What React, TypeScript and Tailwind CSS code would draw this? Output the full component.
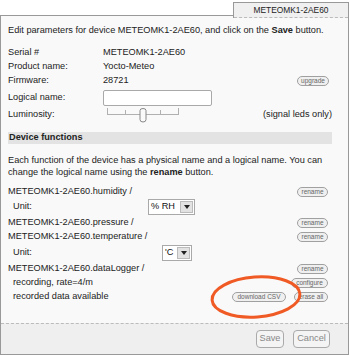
const Pill = ({ label, w }: { label: string; w: string }) => (
  <span
    className={`${w} h-[10px] flex items-center justify-center rounded-full border border-[#a0a0a0] bg-[#f0f0f0] text-[6.5px] leading-none text-[#666]`}
  >
    {label}
  </span>
);

const Select = ({ value, w }: { value: string; w: string }) => (
  <div className={`${w} h-[16px] flex border border-[#a9a9a9] bg-white`}>
    <span className="flex-1 pl-[2px] flex items-center text-[9.2px] text-[#111]">{value}</span>
    <span className="w-[13px] m-[1px] flex items-center justify-center bg-[#e2e2e2] border border-[#bbb]">
      <svg width="6" height="4" viewBox="0 0 6 4">
        <path d="M0 0h6L3 4z" fill="#222" />
      </svg>
    </span>
  </div>
);

export default function App() {
  return (
    <div className="relative w-[350px] h-[355px] bg-white font-['Liberation_Sans',Arial,sans-serif] text-[9.2px] text-[#222]">
      <div className="w-[349px] flex h-[18px]">
        <div className="flex-1 flex flex-col">
          <div className="h-[15px]" />
          <div className="flex-1 border-t border-l border-[#999] bg-[#f9f9f9]" />
        </div>
        <div className="w-[116px] mt-[2px] flex flex-col border-t border-l border-r border-[#999] bg-[#f0f0f0]">
          <div className="flex-1 flex items-center justify-center text-[8.4px] text-[#222]">METEOMK1-2AE60</div>
          <div className="border-b border-dashed border-[#bbb]" />
        </div>
      </div>

      <div className="w-[349px] h-[337px] flex flex-col border-l border-r border-b border-[#999] bg-[#f9f9f9]">
        <div className="px-[7px] pt-[6px] flex-1">
          <div className="h-[14px] flex items-center">
            Edit parameters for device METEOMK1-2AE60, and click on the&nbsp;<b>Save</b>&nbsp;button.
          </div>

          <div className="mt-[8px]">
            <div className="h-[14px] flex items-center">
              <span className="w-[95px]">Serial #</span>
              <span>METEOMK1-2AE60</span>
            </div>
            <div className="h-[14px] flex items-center">
              <span className="w-[95px]">Product name:</span>
              <span>Yocto-Meteo</span>
            </div>
            <div className="h-[14px] flex items-center">
              <span className="w-[95px]">Firmware:</span>
              <span className="flex-1">28721</span>
              <span className="pr-[12px]">
                <Pill label="upgrade" w="w-[32px]" />
              </span>
            </div>
            <div className="h-[17px] flex items-center mt-[1px]">
              <span className="w-[95px]">Logical name:</span>
              <span className="w-[109px] h-[16px] border border-[#a9a9a9] rounded-[2px] bg-white" />
            </div>
            <div className="h-[17px] flex items-center">
              <span className="w-[98px]">Luminosity:</span>
              <svg width="74" height="16" viewBox="0 0 74 16" className="flex-none">
                <g stroke="#b0b0b0" fill="none" strokeWidth="1">
                  <path d="M1.5 7.5H72.5" />
                  <path d="M1.5 1v7M19.5 3v5M54.5 3v5M72.5 1v7" />
                </g>
                <path
                  d="M34 3.5q0-2 3-2t3 2v9q0 2.5-3 2.5t-3-2.5z"
                  fill="#fafafa"
                  stroke="#888"
                  strokeWidth="1"
                />
              </svg>
              <span className="flex-1 text-right pr-[9px]">(signal leds only)</span>
            </div>
          </div>

          <div className="mt-[9px] h-[12px] mr-[9px] flex items-center pl-[1px] bg-[#e3e3e3] font-bold">
            Device functions
          </div>

          <div className="mt-[10px] leading-[12px] whitespace-nowrap">
            Each function of the device has a physical name and a logical name. You can
            <br />
            change the logical name using the <b>rename</b> button.
          </div>

          <div className="mt-[8px] pr-[13px]">
            <div className="h-[12px] flex items-center justify-between">
              <span>METEOMK1-2AE60.humidity /</span>
              <Pill label="rename" w="w-[31px]" />
            </div>
            <div className="h-[18px] flex items-center pl-[5px]">
              <span className="w-[135px]">Unit:</span>
              <Select value="% RH" w="w-[47px]" />
            </div>
            <div className="h-[14px] flex items-center justify-between">
              <span>METEOMK1-2AE60.pressure /</span>
              <Pill label="rename" w="w-[31px]" />
            </div>
            <div className="h-[14px] flex items-center justify-between">
              <span>METEOMK1-2AE60.temperature /</span>
              <Pill label="rename" w="w-[31px]" />
            </div>
            <div className="h-[18px] flex items-center pl-[5px]">
              <span className="w-[149px]">Unit:</span>
              <Select value="'C" w="w-[30px]" />
            </div>
            <div className="h-[14px] flex items-center justify-between">
              <span>METEOMK1-2AE60.dataLogger /</span>
              <Pill label="rename" w="w-[31px]" />
            </div>
            <div className="h-[14px] flex items-center justify-between pl-[5px]">
              <span>recording, rate=4/m</span>
              <Pill label="configure" w="w-[37px]" />
            </div>
            <div className="h-[14px] flex items-center pl-[5px]">
              <span className="flex-1">recorded data available</span>
              <Pill label="download CSV" w="w-[54px]" />
              <span className="w-[8px]" />
              <Pill label="erase all" w="w-[34px]" />
            </div>
          </div>
        </div>

        <div className="h-[31px] flex items-center justify-end gap-[9px] pr-[18px] border-t border-dashed border-[#bbb] bg-[#efefef]">
          <span className="w-[28px] h-[18px] flex items-center justify-center rounded-[4px] border border-[#aaa] bg-[#f4f4f4] text-[#888]">
            Save
          </span>
          <span className="w-[37px] h-[18px] flex items-center justify-center rounded-[4px] border border-[#aaa] bg-[#f4f4f4] text-[#888]">
            Cancel
          </span>
        </div>
      </div>

      <svg
        className="absolute left-[208px] top-[272px] pointer-events-none"
        width="96"
        height="50"
        viewBox="0 0 96 50"
      >
        <ellipse
          cx="48"
          cy="25"
          rx="44"
          ry="20"
          transform="rotate(-4 48 25)"
          fill="none"
          stroke="#f05a24"
          strokeWidth="3"
        />
      </svg>
    </div>
  );
}
